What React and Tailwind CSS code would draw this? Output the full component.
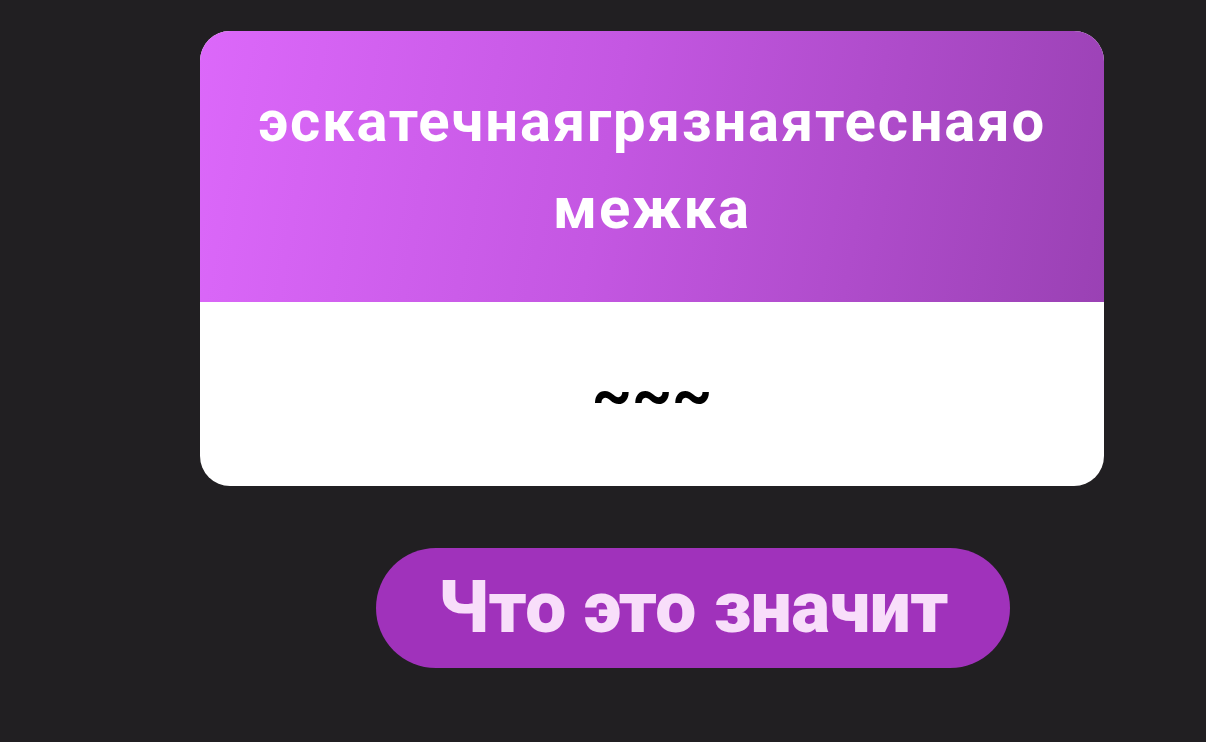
export default function App() {
  return (
    <main className="min-h-screen w-full bg-[#211f22] pt-[31px] font-['Roboto','Noto_Sans',sans-serif]">
      {/* карточка со словом */}
      <div className="ml-[200px] w-[904px] overflow-hidden rounded-[30px] bg-white">
        <div className="flex h-[271px] items-center justify-center bg-[linear-gradient(100deg,#dc68fa_0%,#c457e2_45%,#9a41b4_100%)] px-10 pb-[4px]">
          <h2 className="text-center text-[58px] font-bold leading-[87px] tracking-[1.8px] text-white">
            эскатечнаягрязнаятеснаяо межка
          </h2>
        </div>
        <div className="flex h-[184px] items-center justify-center">
          <p className="text-[62px] font-bold leading-none text-black">~~~</p>
        </div>
      </div>

      <button className="ml-[376px] mt-[62px] flex h-[120px] w-[634px] items-center justify-center rounded-full bg-[#a032bb] text-[73px] font-black tracking-[-0.5px] text-[#f8defa]">
        Что это значит
      </button>
    </main>
  );
}
